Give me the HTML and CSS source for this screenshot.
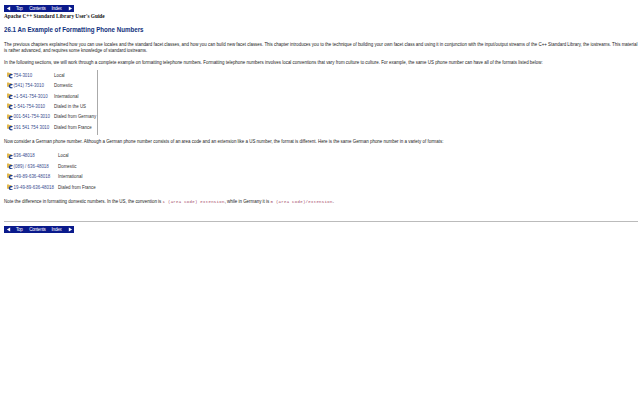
FILE: index.html
```html
<!DOCTYPE html>
<html lang="en">
<head>
<meta charset="utf-8">
<title>An Example of Formatting Phone Numbers</title>
<link rel="stylesheet" href="styles.css">
</head>
<body>
<svg class="defs" aria-hidden="true"><symbol id="link-icon" viewBox="0 0 7 7"><path d="M0 0.5H2L2.5 1H4.5V3.5H2.5V5H0Z" fill="#e3b94f"/><path d="M5.8 3.2A1.8 1.8 0 1 0 5.8 5.8" fill="none" stroke="#1d3f8f" stroke-width="1.5"/></symbol></svg>
<nav class="nav">
  <svg class="arrow" viewBox="0 0 6 6"><path d="M5 0.5V5.5L1 3Z"/></svg>
  <a class="nav-top">Top</a><a class="nav-contents">Contents</a><a class="nav-index">Index</a>
  <svg class="arrow arrow-next" viewBox="0 0 6 6"><path d="M1 0.5V5.5L5 3Z"/></svg>
</nav>
<div class="guide">Apache C++ Standard Library User's Guide</div>
<h1 class="heading">26.1 An Example of Formatting Phone Numbers</h1>
<p class="para para-first">The previous chapters explained how you can use locales and the standard facet classes, and how you can build new facet classes. This chapter introduces you to the technique of building your own facet class and using it in conjunction with the input/output streams of the C++ Standard Library, the iostreams. This material is rather advanced, and requires some knowledge of standard iostreams.</p>
<p class="para para-second">In the following sections, we will work through a complete example on formatting telephone numbers. Formatting telephone numbers involves local conventions that vary from culture to culture. For example, the same US phone number can have all of the formats listed below:</p>
<div class="phones phones-us">
  <div class="phone"><span class="num"><svg class="ico"><use href="#link-icon"/></svg>754-3010</span><span class="desc">Local</span></div>
  <div class="phone"><span class="num"><svg class="ico"><use href="#link-icon"/></svg>(541) 754-3010</span><span class="desc">Domestic</span></div>
  <div class="phone"><span class="num"><svg class="ico"><use href="#link-icon"/></svg>+1-541-754-3010</span><span class="desc">International</span></div>
  <div class="phone"><span class="num"><svg class="ico"><use href="#link-icon"/></svg>1-541-754-3010</span><span class="desc">Dialed in the US</span></div>
  <div class="phone"><span class="num"><svg class="ico"><use href="#link-icon"/></svg>001-541-754-3010</span><span class="desc">Dialed from Germany</span></div>
  <div class="phone"><span class="num"><svg class="ico"><use href="#link-icon"/></svg>191 541 754 3010</span><span class="desc">Dialed from France</span></div>
</div>
<p class="para para-third">Now consider a German phone number. Although a German phone number consists of an area code and an extension like a US number, the format is different. Here is the same German phone number in a variety of formats:</p>
<div class="phones phones-de">
  <div class="phone"><span class="num"><svg class="ico"><use href="#link-icon"/></svg>636-48018</span><span class="desc">Local</span></div>
  <div class="phone"><span class="num"><svg class="ico"><use href="#link-icon"/></svg>(089) / 636-48018</span><span class="desc">Domestic</span></div>
  <div class="phone"><span class="num"><svg class="ico"><use href="#link-icon"/></svg>+49-89-636-48018</span><span class="desc">International</span></div>
  <div class="phone"><span class="num"><svg class="ico"><use href="#link-icon"/></svg>19-49-89-636-48018</span><span class="desc">Dialed from France</span></div>
</div>
<p class="para para-fourth">Note the difference in formatting domestic numbers. In the US, the convention is <code class="code">1 (area code) extension</code>, while in Germany it is <code class="code">0 (area code)/extension</code>.</p>
<hr class="rule">
<nav class="nav">
  <svg class="arrow" viewBox="0 0 6 6"><path d="M5 0.5V5.5L1 3Z"/></svg>
  <a class="nav-top">Top</a><a class="nav-contents">Contents</a><a class="nav-index">Index</a>
  <svg class="arrow arrow-next" viewBox="0 0 6 6"><path d="M1 0.5V5.5L5 3Z"/></svg>
</nav>
</body>
</html>
```
FILE: styles.css
```css
html, body { margin: 0; padding: 0; background: #fff; }
body { padding: 5px 2px 0 4px; font-family: "Liberation Sans", Arial, sans-serif; font-size: 4.44px; color: #222; }
.defs { display: none; }
.nav { display: flex; align-items: center; width: 70px; height: 7px; background: #0a1a8c; color: #fff; font-size: 4.6px; letter-spacing: -0.25px; white-space: nowrap; }
.arrow { width: 5px; height: 5px; fill: #fff; margin-left: 1.5px; flex: none; }
.arrow-next { margin-left: 6px; }
.nav-top { margin-left: 5.5px; }
.nav-contents { margin-left: 6.5px; }
.nav-index { margin-left: 6px; }
.guide { font-family: "Liberation Serif", serif; font-weight: bold; font-size: 5.3px; line-height: 7px; color: #111; margin-top: 0.5px; }
.heading { margin: 5px 0 0; font-size: 7.6px; line-height: 10px; font-weight: bold; color: #10307c; white-space: nowrap; transform: scaleX(0.814); transform-origin: left center; }
.para { margin: 0; line-height: 6.2px; }
.para-first { margin-top: 7px; }
.para-second { margin-top: 6px; }
.para-third { margin-top: 4px; }
.para-fourth { margin-top: 7px; }
.phones { display: flex; flex-direction: column; width: 93px; }
.phones-us { margin-top: 4px; border-right: 1px solid #aaa; padding-bottom: 3px; }
.phones-de { margin-top: 5px; }
.phone { display: flex; align-items: center; height: 10.4px; padding-left: 3px; white-space: nowrap; }
.num { display: flex; align-items: center; width: 47px; color: #3a4d8f; }
.ico { width: 6.5px; height: 6.5px; flex: none; }
.desc { color: #333; }
.phones-de .num { width: 51px; }
.code { font-family: "Liberation Mono", monospace; font-size: 4px; color: #a04060; letter-spacing: 0.3px; }
.rule { margin: 16px 0 0; border: 0; border-top: 1px solid #bbb; width: 634px; }
.rule + .nav { margin-top: 4px; }
```
